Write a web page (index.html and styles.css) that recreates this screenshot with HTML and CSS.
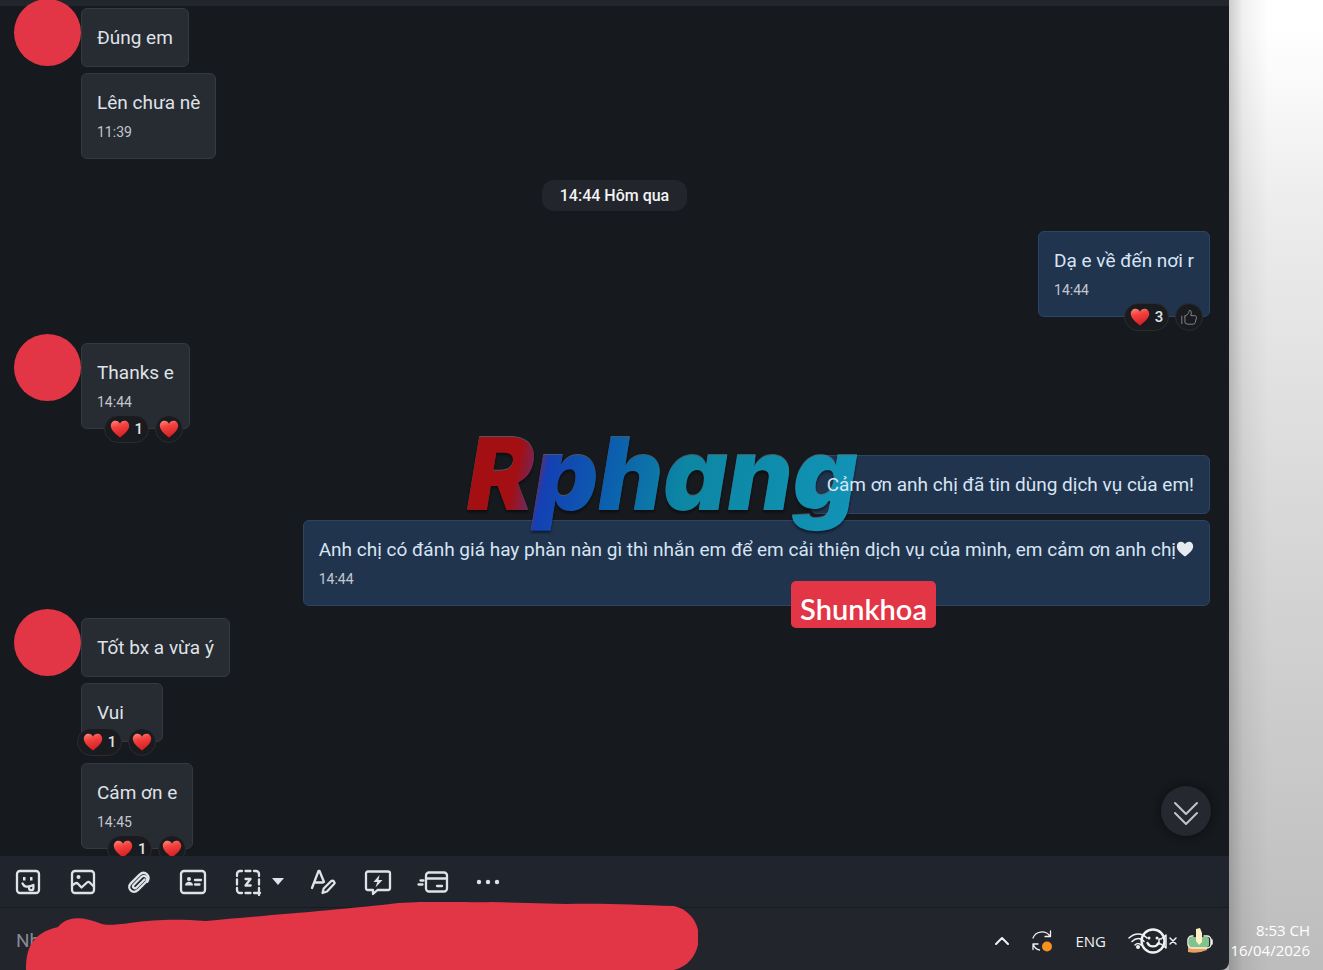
FILE: index.html
```
<!DOCTYPE html>
<html lang="vi">
<head>
	<meta charset="UTF-8">
	<meta name="viewport" content="width=device-width, initial-scale=1">
	<title>Chat</title>
	<link rel="stylesheet" href="styles.css">
</head>
<body>
	<!-- shared shapes -->
	<svg class="defs" aria-hidden="true">
		<linearGradient id="heart-fill" x1="0" y1="0" x2="0.3" y2="1">
			<stop offset="0" stop-color="#ff8a80"/>
			<stop offset="0.4" stop-color="#f4433f"/>
			<stop offset="1" stop-color="#d81f26"/>
		</linearGradient>
		<symbol id="heart" viewBox="0 0 20 18">
			<path d="M10 17.5C7 15 .8 10.800.8 5.800.8 2.900 2.900.800 5.500.800 7.500.800 9.200 1.900 10 3.700 10.800 1.900 12.500.800 14.500.800 17.100.800 19.200 2.900 19.200 5.800 19.200 10.800 13 15 10 17.500Z"/>
		</symbol>
	</svg>

	<div class="screen">
		<main class="window">
			<section class="chat">
				<div class="msg">
					<span class="avatar"></span>
					<div class="bubble"><p>Đúng em</p></div>
				</div>
				<div class="msg">
					<div class="bubble"><p>Lên chưa nè</p><time>11:39</time></div>
				</div>

				<div class="date">14:44 Hôm qua</div>

				<div class="msg mine">
					<div class="bubble">
						<p>Dạ e về đến nơi r</p><time>14:44</time>
						<div class="reacts">
							<button class="react count"><svg class="heart"><use href="#heart"/></svg>3</button>
							<button class="react" aria-label="Like"><svg class="like" viewBox="0 0 20 20"><path d="M2 9v8.500M5.500 9v7.500c1.500 1.500 3 1.500 4.500 1.500h4.500c1.500 0 2.200-.8 2.500-2l1.200-5c.3-1.500-.5-2.500-2-2.500H12c.8-2 .8-6-1-6-1.500 0-.8 2-1.800 3.500C8.300 7.500 7 8.500 5.500 9z"/></svg></button>
						</div>
					</div>
				</div>

				<div class="msg far">
					<span class="avatar"></span>
					<div class="bubble">
						<p>Thanks e</p><time>14:44</time>
						<div class="reacts">
							<button class="react count"><svg class="heart"><use href="#heart"/></svg>1</button>
							<button class="react" aria-label="Heart"><svg class="heart"><use href="#heart"/></svg></button>
						</div>
					</div>
				</div>

				<div class="msg mine far">
					<div class="bubble"><p>Cảm ơn anh chị đã tin dùng dịch vụ của em!</p></div>
				</div>
				<div class="msg mine">
					<div class="bubble">
						<p>Anh chị có đánh giá hay phàn nàn gì thì nhắn em để em cải thiện dịch vụ của mình, em cảm ơn anh chị<svg class="heart white"><use href="#heart"/></svg></p><time>14:44</time>
						<span class="tag">Shunkhoa</span>
					</div>
				</div>

				<div class="msg turn">
					<span class="avatar"></span>
					<div class="bubble"><p>Tốt bx a vừa ý</p></div>
				</div>
				<div class="msg">
					<div class="bubble">
						<p>Vui</p>
						<div class="reacts">
							<button class="react count"><svg class="heart"><use href="#heart"/></svg>1</button>
							<button class="react" aria-label="Heart"><svg class="heart"><use href="#heart"/></svg></button>
						</div>
					</div>
				</div>
				<div class="msg after-react">
					<div class="bubble">
						<p>Cám ơn e</p><time>14:45</time>
						<div class="reacts">
							<button class="react count"><svg class="heart"><use href="#heart"/></svg>1</button>
							<button class="react" aria-label="Heart"><svg class="heart"><use href="#heart"/></svg></button>
						</div>
					</div>
				</div>

				<div class="watermark">Rphang</div>
				<button class="to-bottom" aria-label="Scroll to bottom"><svg viewBox="0 0 26 26"><path d="M2 3l11 11L24 3M2 13l11 11 11-11"/></svg></button>
			</section>

			<footer class="composer">
				<div class="tools">
					<button aria-label="Sticker"><svg viewBox="0 0 28 28"><rect x="3" y="3" width="22" height="22" rx="3"/><path d="M8.500 15.500c1.500 3.500 5 4 9.500 2M15 18.500v1.500a2.200 2.200 0 0 0 4.400 0v-3"/><path class="fill" d="M9 9h2.500v3.500H9zM16 9h2.500v3.500H16z"/></svg></button>
					<button aria-label="Image"><svg viewBox="0 0 28 28"><rect x="3" y="3" width="22" height="22" rx="3"/><path d="M3 17.500l3-2c1.200-.8 2.200-.6 3.200.5l3.300 3.500 5.500-5c1-.9 2-.8 3 .2l4 4"/><circle class="fill" cx="9.500" cy="9" r="2"/></svg></button>
					<button aria-label="Attach file"><svg viewBox="0 0 28 28"><path d="M20.500 11.500l-8 8c-2 2-4.800-.6-2.800-2.800l7.500-7.500c3.600-3.400 8.200 1 4.800 4.800l-8.200 8.200c-5 4.600-11.600-1.800-7-6.800l8.500-8.500c5.600-5.200 12.200 1.200 8 6.800"/></svg></button>
					<button aria-label="Business card"><svg viewBox="0 0 28 28"><rect x="2" y="3" width="24" height="22" rx="3"/><path d="M16 12h6M16 16.500h4.500"/><path class="fill" d="M6 17.500c0-5 8-5 8 0z"/><circle class="fill" cx="10" cy="11" r="2"/></svg></button>
					<div class="split">
						<button aria-label="Screenshot"><svg viewBox="0 0 28 28"><path d="M3 8V6a3 3 0 0 1 3-3h2M11.500 3h5M20 3h2a3 3 0 0 1 3 3v2M25 11.500v5M3 11.500v5M3 20v2a3 3 0 0 0 3 3h2M11.500 25h5M20 25h6M25 20v7"/><path d="M11.500 11h5l-5 6.500h5.200"/></svg></button>
						<button class="caret" aria-label="More screenshot options"><svg viewBox="0 0 14 9"><path class="fill" d="M1 1h12L7 8z"/></svg></button>
					</div>
					<button aria-label="Format text"><svg viewBox="0 0 28 28"><path d="M3 20L9.500 3h1L15 14M5.500 14.500h8.500"/><path d="M13.500 25l1.200-4.500 7.300-7.300c2.200-1.500 4.400 1 3 2.800L18 23.500z"/></svg></button>
					<button aria-label="Quick message"><svg viewBox="0 0 28 28"><path d="M4 3.500h20a2 2 0 0 1 2 2V20a2 2 0 0 1-2 2H13.500L9 26v-4H4a2 2 0 0 1-2-2V5.500a2 2 0 0 1 2-2z"/><path class="fill" d="M15.500 7l-6 7h3.800l-1.800 5.500 7-7.500h-4z"/></svg></button>
					<button aria-label="Transfer"><svg class="wide" viewBox="0 0 32 28"><rect x="9" y="4.500" width="21" height="19" rx="3"/><path d="M9 10.500h21M20 18h5M3.500 12.500h3M1.500 16.500h4"/></svg></button>
					<button aria-label="More"><svg viewBox="0 0 28 28"><circle class="fill" cx="5" cy="14" r="2.200"/><circle class="fill" cx="14" cy="14" r="2.200"/><circle class="fill" cx="23" cy="14" r="2.200"/></svg></button>
				</div>
				<div class="entry">
					<input type="text" placeholder="Nhắn" aria-label="Nhắn">
					<div class="tray">
						<svg class="chevron" viewBox="0 0 14 8"><path d="M1 7l6-6 6 6"/></svg>
						<svg class="sync" viewBox="0 0 22 22"><path d="M2 8C4.500 1 14 0 18.500 5.500M19.500 1v5.500H14M2 19.500V14h5M2.500 15c1 2.500 3 4.500 6 5"/><circle cx="16" cy="16.500" r="5"/></svg>
						<span class="lang">ENG</span>
						<svg class="net" viewBox="0 0 50 28"><path d="M1 11c5.500-5.500 13-5.500 18 0M4 14.500c4-4 9-4 12 0M7 18c2-2 4-2 6 0"/><circle class="fill" cx="10" cy="20" r="2"/><circle class="face" cx="25" cy="14" r="11.500"/><path class="face" d="M19.500 16c2 4.500 9 4.500 11 0"/><circle class="fill" cx="21" cy="11" r="1.500"/><circle class="fill" cx="29" cy="11" r="1.500"/><path d="M31 12h2l5-4v13l-5-4h-2zM42 11l6 6M48 11l-6 6"/></svg>
						<svg class="battery" viewBox="0 0 26 26"><path fill="#ec9f5a" d="M1 16h19v6q-9 4-19 2z"/><rect x="2" y="9" width="20" height="10" rx="2" fill="#7fc48a"/><path d="M6 8H5a4 4 0 0 0-4 4v4a4 4 0 0 0 4 4h15a4 4 0 0 0 4-4v-4a4 4 0 0 0-4-4h-3M25 12v4" fill="none" stroke="#f2f3f0" stroke-width="1.500"/><path fill="#fff0c8" d="M9 1l4-1 2 5v9l-3 3-3-4z"/></svg>
					</div>
				</div>
				<svg class="scribble" viewBox="0 0 672 68" preserveAspectRatio="none"><path d="M0 68C0 46 6 31 32 25C42 14 55 14 76 22C95 26 115 14 180 19C230 14 315 8 372 1C425-2 440 1 465 0L540 2C580 1 610 3 648 4C682 12 680 60 648 68Z"/></svg>
			</footer>
		</main>

		<aside class="desktop">
			<div class="clock"><span>8:53 CH</span><span>16/04/2026</span></div>
		</aside>
	</div>
</body>
</html>
```
FILE: styles.css
```
*{
    margin: 0;
    padding: 0;
    box-sizing: border-box;
}
body{
    background: #b4b4b4;
    font-family: Roboto, "Noto Sans", sans-serif;
    font-size: 19px;
    color: #dfe2e7;
}
button{
    border: 0;
    background: none;
    color: inherit;
    font: inherit;
    cursor: pointer;
}
svg{
    display: block;
    fill: none;
    stroke: currentColor;
    stroke-width: 2;
    stroke-linecap: round;
    stroke-linejoin: round;
}
.fill{
    fill: currentColor;
    stroke: none;
}
.defs{
    position: absolute;
    width: 0;
    height: 0;
}
.screen{
    display: flex;
    height: 100vh;
    overflow: hidden;
}

/* chat window */
.window{
    flex: 1;
    min-width: 0;
    display: flex;
    flex-direction: column;
    border-radius: 0 0 8px 0;
    overflow: hidden;
}
.chat{
    flex: 1;
    min-height: 0;
    position: relative;
    display: flex;
    flex-direction: column;
    padding: 8px 19px 0 81px;
    /* thin edge of the header on top */
    background: linear-gradient(#22262c 6px, #16191d 6px);
    overflow: hidden;
}
.msg{
    flex: none;
    position: relative;
    display: flex;
    margin-bottom: 6px;
}
.mine{
    justify-content: flex-end;
}
.far{
    margin-top: 20px;
}
.turn{
    margin-top: 6px;
}
.after-react{
    margin-top: 15px;
}
.avatar{
    position: absolute;
    left: -67px;
    top: -9px;
    width: 67px;
    height: 67px;
    border-radius: 50%;
    background: #e23545;
}
.bubble{
    position: relative;
    min-width: 82px;
    padding: 14px 15px;
    border: 1px solid #353940;
    border-radius: 6px;
    background: #272b32;
}
.mine .bubble{
    border-color: #2c4562;
    background: #20344e;
}
.bubble p{
    position: relative;
    z-index: 2;
    line-height: 29px;
}
.bubble time{
    display: block;
    margin-top: 3px;
    font-size: 14px;
    line-height: 24px;
    color: #c3c7ce;
}
.mine p{
    color: #d7e4f3;
}
.date{
    align-self: center;
    flex: none;
    margin: 15px 0 20px;
    /* centre on the window, not on the message column */
    transform: translateX(-31px);
    padding: 0 18px;
    border-radius: 12px;
    background: #22252b;
    font-size: 16px;
    font-weight: 500;
    line-height: 31px;
    color: #f2f3f5;
}

/* reactions */
.reacts{
    position: absolute;
    right: 6px;
    bottom: -15px;
    z-index: 3;
    display: flex;
    gap: 6px;
}
.react{
    display: flex;
    align-items: center;
    justify-content: center;
    gap: 5px;
    width: 28px;
    height: 28px;
    border: 1px solid #292c31;
    border-radius: 14px;
    background: #191b1f;
    font-size: 15px;
    font-weight: 500;
    line-height: 12px;
}
.count{
    width: 45px;
}
.heart{
    width: 20px;
    height: 18px;
    fill: url(#heart-fill);
    stroke: none;
}
.white{
    display: inline-block;
    width: 18px;
    height: 16px;
    vertical-align: -1px;
    fill: #e6ebf2;
}
.like{
    width: 18px;
    height: 18px;
    color: #8b8f96;
    stroke-width: 1;
}
.tag{
    position: absolute;
    right: 273px;
    top: 60px;
    z-index: 3;
    padding: 8px 9px 0;
    border-radius: 5px;
    background: #e23545;
    font-family: Lato, sans-serif;
    font-size: 29px;
    font-weight: 600;
    line-height: 39px;
    color: #fff;
}
.watermark{
    position: absolute;
    left: 459px;
    top: 414px;
    z-index: 1;
    padding: 0 8px;
    background: linear-gradient(102deg, #a30f12 16%, #6b2a68 21%, #1440b4 23%, #0c5fae 38%, #0d86a3 55%, #1295b8);
    -webkit-background-clip: text;
    background-clip: text;
    color: transparent;
    filter: drop-shadow(0 -1px 0 rgba(150, 190, 200, .4)) drop-shadow(0 2px 1px rgba(0, 0, 0, .5));
    font-family: Inter, sans-serif;
    font-size: 100px;
    font-style: italic;
    font-weight: 900;
    line-height: 120px;
}
.to-bottom{
    position: absolute;
    right: 18px;
    bottom: 20px;
    display: flex;
    align-items: center;
    justify-content: center;
    width: 50px;
    height: 50px;
    padding-top: 4px;
    border-radius: 50%;
    background: #25282e;
    box-shadow: 0 0 8px #0c0e11;
    color: #c0c4cc;
}
.to-bottom svg{
    width: 26px;
    height: 26px;
}

/* composer */
.composer{
    flex: none;
    position: relative;
    background: #22252b;
}
.tools{
    display: flex;
    align-items: center;
    gap: 21px;
    height: 52px;
    padding-left: 11px;
    border-bottom: 1px solid #181b1f;
    background: #20252d;
}
.tools button{
    display: flex;
    align-items: center;
    justify-content: center;
    width: 34px;
    height: 34px;
}
.tools svg{
    width: 28px;
    height: 28px;
    stroke-width: 2.3;
}
.tools .wide{
    width: 32px;
}
.split{
    display: flex;
}
.split .caret{
    justify-content: flex-end;
    width: 20px;
}
.split .caret svg{
    width: 14px;
    height: 9px;
}
.entry{
    display: flex;
    align-items: center;
    height: 62px;
    padding: 3px 16px 0;
}
.entry input{
    flex: 1;
    min-width: 0;
    border: 0;
    outline: 0;
    background: none;
    font: inherit;
    color: #dfe2e7;
}
.entry input::placeholder{
    color: #858b94;
}
.scribble{
    position: absolute;
    left: 26px;
    bottom: 0;
    width: 672px;
    height: 68px;
    fill: #e23545;
    stroke: none;
    pointer-events: none;
}

/* system tray */
.tray{
    display: flex;
    align-items: center;
    color: #f0f1f3;
}
.chevron{
    width: 14px;
    height: 8px;
    margin-right: 22px;
}
.sync{
    width: 22px;
    height: 22px;
    margin-right: 22px;
    stroke-width: 1.3;
}
.sync circle{
    fill: #f6921e;
    stroke: none;
}
.lang{
    margin-right: 22px;
    font-family: "Open Sans", sans-serif;
    font-size: 15px;
}
.net{
    width: 50px;
    height: 28px;
    margin-right: 9px;
    stroke-width: 1.5;
}
.net .face{
    stroke-width: 2.3;
}
.battery{
    width: 26px;
    height: 26px;
    stroke: none;
}
.desktop{
    flex: none;
    display: flex;
    flex-direction: column;
    justify-content: flex-end;
    width: 94px;
    padding: 0 13px 10px 0;
    background: linear-gradient(90deg, rgba(0, 0, 0, .2), rgba(0, 0, 0, .06) 14px, transparent 40px), linear-gradient(#fff 3%, #ececec 22%, #d4d4d4 60%, #bdbdbd);
}
.clock{
    display: flex;
    flex-direction: column;
    align-items: flex-end;
    font-family: "Open Sans", sans-serif;
    font-size: 15px;
    line-height: 20px;
    color: #fff;
}
```
